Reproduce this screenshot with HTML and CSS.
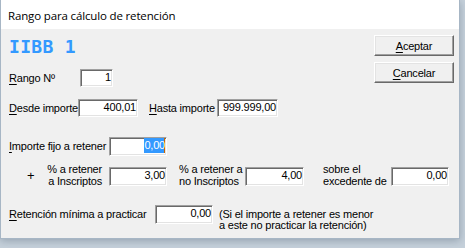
FILE: index.html
```html
<!DOCTYPE html>
<html lang="es">
<head>
<meta charset="UTF-8">
<title>Rango para cálculo de retención</title>
<link rel="stylesheet" href="styles.css">
</head>
<body>
<div class="window">

<!-- Barra de titulo -->
<div class="titlebar">Rango para cálculo de retención</div>

<div class="client">

<!-- Cabecera + botones -->
<div class="top">
<div class="top-left">
<div class="heading">IIBB 1</div>
<div class="row row-rango">
<label class="lbl w-rango"><u>R</u>ango Nº</label>
<div class="edit e-rango">1</div>
</div>
<div class="row row-desde">
<label class="lbl w-desde"><u>D</u>esde importe</label>
<div class="edit e-desde">400,01</div>
<label class="lbl w-hasta"><u>H</u>asta importe</label>
<div class="edit e-hasta">999.999,00</div>
</div>
</div>
<div class="buttons">
<button class="btn"><u>A</u>ceptar</button>
<button class="btn"><u>C</u>ancelar</button>
</div>
</div>

<!-- Importes -->
<div class="row row-fijo">
<label class="lbl w-fijo"><u>I</u>mporte fijo a retener</label>
<div class="edit e-med"><span class="sel">0,00</span></div>
</div>

<div class="row-pct">
<span class="plus">+</span>
<label class="lbl2 w-pct1">% a retener<br>a Inscriptos</label>
<div class="edit e-med e-pct">3,00</div>
<label class="lbl2 w-pct2">% a retener a<br>no Inscriptos</label>
<div class="edit e-pct2 e-pct">4,00</div>
<label class="lbl2 w-pct3">sobre el<br>excedente de</label>
<div class="edit e-med e-pct">0,00</div>
</div>

<div class="row-min">
<label class="lbl w-min"><u>R</u>etención mínima a practicar</label>
<div class="edit e-med">0,00</div>
<div class="note">(Si el importe a retener es menor<br>a este no practicar la retención)</div>
</div>

</div>
</div>
</body>
</html>
```

FILE: styles.css
```css
*{margin:0;padding:0;box-sizing:border-box;}
body{
background:#c6d1db;width:465px;height:248px;overflow:hidden;
font-family:"Liberation Sans",Arial,sans-serif;font-size:11px;letter-spacing:-.2px;color:#000;
}
u{text-decoration:underline;text-underline-offset:2px;}

/* Ventana */
.window{
width:460px;height:239px;background:#f0f0f0;
border:1px solid #a7b6c5;border-top:none;
display:flex;flex-direction:column;
box-shadow:0 2px 8px rgba(60,80,100,.35);
}
.titlebar{
height:29px;flex:none;background:#fff;padding:2px 0 0 7px;line-height:27px;
font-family:"Open Sans",sans-serif;font-size:11.5px;letter-spacing:-.15px;
}
.client{flex:1;padding:0 5px 0 8px;}

/* Parte superior */
.top{display:flex;justify-content:space-between;}
.heading{
margin-top:9px;height:18px;line-height:18px;
font-family:"DejaVu Sans Mono",monospace;font-weight:bold;font-size:18px;color:#3399ff;letter-spacing:.3px;
}
.row{display:flex;align-items:center;}
.row-rango{margin-top:13px;height:18px;}
.row-desde{margin-top:12px;height:18px;}
.lbl{line-height:18px;white-space:nowrap;}
.w-rango{width:71px;}
.w-desde{width:69px;}
.w-hasta{width:68px;margin-left:11px;}
.w-fijo{width:100px;}
.w-min{width:146px;}

.buttons{display:flex;flex-direction:column;gap:6px;padding-top:6px;}
.btn{
width:80px;height:21px;background:#f0f0f0;
border:1px solid;border-color:#fff #696969 #696969 #fff;
box-shadow:inset -1px -1px #a0a0a0,inset 1px 1px #e3e3e3;
font:inherit;letter-spacing:inherit;color:#000;
}

/* Cajas de texto */
.edit{
height:18px;background:#fff;text-align:right;padding-right:1px;line-height:14px;white-space:nowrap;
border:1px solid;border-color:#a0a0a0 #fff #fff #a0a0a0;
box-shadow:inset 1px 1px #696969,inset -1px -1px #e3e3e3;
}
.e-rango{width:33px;}
.e-desde{width:60px;}
.e-hasta{width:61px;}
.e-med{width:58px;height:19px;line-height:15px;}
.e-pct2{width:59px;height:19px;line-height:15px;}
.sel{display:inline-block;background:#3399ff;color:#fff;line-height:15px;box-shadow:inset -1px 0 #cc6600;}

/* Fila importe fijo */
.row-fijo{margin-top:20px;height:19px;}
.row-fijo .lbl{line-height:19px;}

/* Fila porcentajes */
.row-pct{display:flex;align-items:flex-start;margin-top:7px;height:24px;}
.plus{width:6px;margin-left:18px;margin-top:6px;font-size:13px;line-height:13px;letter-spacing:0;}
.lbl2{line-height:12px;white-space:nowrap;}
.w-pct1{width:69px;margin-right:7px;text-align:right;}
.w-pct2{width:66px;margin-left:12px;}
.w-pct3{width:68px;margin-left:19px;}
.e-pct{margin-top:4px;}

/* Retencion minima */
.row-min{display:flex;align-items:flex-start;margin-top:18px;}
.row-min .lbl{line-height:19px;}
.note{margin-left:6px;margin-top:4px;line-height:11px;white-space:nowrap;}
```
